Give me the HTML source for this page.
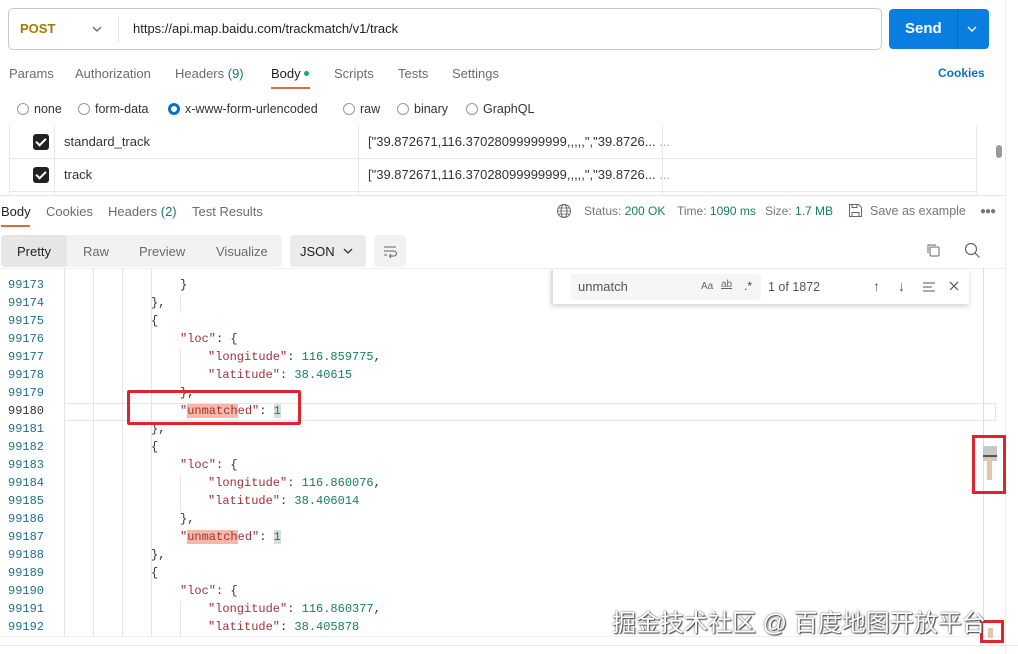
<!DOCTYPE html>
<html><head><meta charset="utf-8"><style>
*{margin:0;padding:0;box-sizing:border-box}
body{width:1018px;height:654px;overflow:hidden;background:#fff;font-family:"Liberation Sans",sans-serif;position:relative;color:#212121}
.a{position:absolute;white-space:nowrap}
.t{font-size:13px;color:#6b6b6b}
.ln{position:absolute;left:8px;width:50px;font-family:"Liberation Mono",monospace;font-size:12px;color:#1f6f8b}
.cl{position:absolute;font-family:"Liberation Mono",monospace;font-size:12px;color:#333;white-space:pre}
.k{color:#a3303a}.n{color:#15805b}
.g{position:absolute;top:268px;height:368px;width:1px;background:#e4e4e4}
.rad{display:inline-block;width:12px;height:12px;border:1px solid #999;border-radius:50%;vertical-align:-2px;margin-right:5px}
.cb{position:absolute;left:33px;width:16px;height:16px;background:#222;border-radius:3px}
.cb:after{content:"";position:absolute;left:5px;top:2px;width:4px;height:8px;border:solid #fff;border-width:0 2px 2px 0;transform:rotate(45deg)}
</style></head><body>
<div class="a" style="left:8px;top:8px;width:874px;height:42px;border:1px solid #c9c9c9;border-radius:5px"></div>
<div class="a" style="left:20px;top:21px;font-size:13px;color:#a37a00;font-weight:bold">POST</div>
<svg class="a" style="left:91px;top:24px" width="12" height="10"><path d="M2 3l4 4 4-4" fill="none" stroke="#666" stroke-width="1.3"/></svg>
<div class="a" style="left:118px;top:16px;width:1px;height:26px;background:#e2e2e2"></div>
<div class="a" style="left:133px;top:21px;font-size:13px;color:#222">https://api.map.baidu.com/trackmatch/v1/track</div>
<div class="a" style="left:889px;top:9px;width:100px;height:40px;background:#0a7ee0;border-radius:4px"></div>
<div class="a" style="left:957px;top:9px;width:1px;height:40px;background:#0868bb"></div>
<div class="a" style="left:905px;top:20px;font-size:15px;color:#fff;font-weight:bold">Send</div>
<svg class="a" style="left:966px;top:24px" width="12" height="10"><path d="M2 3l4 4 4-4" fill="none" stroke="#fff" stroke-width="1.4"/></svg>
<div class="a" style="left:1005px;top:0;width:1px;height:654px;background:#ececec"></div>
<div class="a t" style="left:9px;top:66px">Params</div>
<div class="a t" style="left:75px;top:66px">Authorization</div>
<div class="a t" style="left:175px;top:66px">Headers <span style="color:#15805b">(9)</span></div>
<div class="a" style="left:271px;top:66px;font-size:13px;color:#222">Body <span style="display:inline-block;width:5px;height:5px;border-radius:50%;background:#1aa86c;vertical-align:2px"></span></div>
<div class="a" style="left:271px;top:87px;width:39px;height:2px;background:#e06a3a"></div>
<div class="a t" style="left:334px;top:66px">Scripts</div>
<div class="a t" style="left:398px;top:66px">Tests</div>
<div class="a t" style="left:452px;top:66px">Settings</div>
<div class="a" style="left:938px;top:66px;font-size:12px;color:#0b6fc4;font-weight:bold">Cookies</div>
<div class="a" style="left:17px;top:102px;font-size:12.5px;color:#333"><span class="rad"></span>none</div>
<div class="a" style="left:78px;top:102px;font-size:12.5px;color:#333"><span class="rad"></span>form-data</div>
<div class="a" style="left:168px;top:102px;font-size:12.5px;color:#333"><span class="rad" style="border:3px solid #0b6fc4"></span>x-www-form-urlencoded</div>
<div class="a" style="left:343px;top:102px;font-size:12.5px;color:#333"><span class="rad"></span>raw</div>
<div class="a" style="left:397px;top:102px;font-size:12.5px;color:#333"><span class="rad"></span>binary</div>
<div class="a" style="left:466px;top:102px;font-size:12.5px;color:#333"><span class="rad"></span>GraphQL</div>
<div class="a" style="left:9px;top:126px;width:968px;height:68px;border-left:1px solid #e8e8e8;border-right:1px solid #e8e8e8"></div>
<div class="a" style="left:54px;top:126px;width:1px;height:68px;background:#e8e8e8"></div>
<div class="a" style="left:358px;top:126px;width:1px;height:68px;background:#e8e8e8"></div>
<div class="a" style="left:662px;top:126px;width:1px;height:68px;background:#e8e8e8"></div>
<div class="a" style="left:9px;top:158px;width:968px;height:1px;background:#e8e8e8"></div>
<div class="a" style="left:9px;top:191px;width:968px;height:1px;background:#e8e8e8"></div>
<div class="cb" style="top:134px"></div><div class="cb" style="top:167px"></div>
<div class="a" style="left:64px;top:134px;font-size:13px;color:#333">standard_track</div>
<div class="a" style="left:64px;top:167px;font-size:13px;color:#333">track</div>
<div class="a" style="left:368px;top:134px;font-size:13px;color:#333">["39.872671,116.37028099999999,,,,,","39.8726... <span style="color:#aaa">...</span></div>
<div class="a" style="left:368px;top:167px;font-size:13px;color:#333">["39.872671,116.37028099999999,,,,,","39.8726... <span style="color:#aaa">...</span></div>
<div class="a" style="left:996px;top:145px;width:6px;height:13px;background:#999;border-radius:3px"></div>
<div class="a" style="left:0;top:195px;width:1005px;height:1px;background:#e6e6e6"></div>
<div class="a" style="left:1px;top:204px;font-size:13px;color:#222">Body</div>
<div class="a" style="left:1px;top:225px;width:29px;height:2px;background:#e06a3a"></div>
<div class="a t" style="left:46px;top:204px">Cookies</div>
<div class="a t" style="left:108px;top:204px">Headers <span style="color:#15805b">(2)</span></div>
<div class="a t" style="left:192px;top:204px">Test Results</div>
<svg class="a" style="left:556px;top:203px" width="16" height="16"><circle cx="8" cy="8" r="6.5" fill="none" stroke="#666"/><ellipse cx="8" cy="8" rx="3" ry="6.5" fill="none" stroke="#666"/><path d="M1.5 8h13M2.5 5h11M2.5 11h11" stroke="#666" stroke-width=".8"/></svg>
<div class="a" style="left:584px;top:204px;font-size:12px;color:#777">Status: <span style="color:#15805b">200 OK</span></div>
<div class="a" style="left:677px;top:204px;font-size:12px;color:#777">Time: <span style="color:#15805b">1090 ms</span></div>
<div class="a" style="left:765px;top:204px;font-size:12px;color:#777">Size: <span style="color:#15805b">1.7 MB</span></div>
<svg class="a" style="left:848px;top:203px" width="15" height="15"><path d="M1.5 1.5h9l3 3v9h-12z M4 13.5v-4h7v4 M4 1.5v3h5v-3" fill="none" stroke="#666"/></svg>
<div class="a" style="left:870px;top:204px;font-size:12.5px;color:#777">Save as example</div>
<div class="a" style="left:980px;top:206px;font-size:10px;color:#777;letter-spacing:-1px">●●●</div>
<div class="a" style="left:1px;top:235px;width:281px;height:32px;background:#f2f2f2;border-radius:4px"></div>
<div class="a" style="left:1px;top:235px;width:66px;height:32px;background:#e6e6e6;border-radius:4px"></div>
<div class="a" style="left:17px;top:244px;font-size:13px;color:#222">Pretty</div>
<div class="a t" style="left:83px;top:244px">Raw</div>
<div class="a t" style="left:139px;top:244px">Preview</div>
<div class="a t" style="left:216px;top:244px">Visualize</div>
<div class="a" style="left:290px;top:235px;width:76px;height:32px;background:#ebebeb;border-radius:4px"></div>
<div class="a" style="left:300px;top:244px;font-size:13px;color:#222">JSON</div>
<svg class="a" style="left:342px;top:246px" width="12" height="10"><path d="M2 3l4 4 4-4" fill="none" stroke="#333" stroke-width="1.3"/></svg>
<div class="a" style="left:374px;top:235px;width:32px;height:32px;background:#f2f2f2;border-radius:4px"></div>
<svg class="a" style="left:382px;top:243px" width="16" height="16"><path d="M2 4h12M2 8h10a2.5 2.5 0 0 1 0 5H8M2 12h3M9 11l-1.5 2 1.5 2" fill="none" stroke="#666"/></svg>
<svg class="a" style="left:925px;top:242px" width="16" height="16"><rect x="5" y="5" width="9" height="9" rx="1" fill="none" stroke="#666"/><path d="M3 11V3h8" fill="none" stroke="#666"/></svg>
<svg class="a" style="left:964px;top:242px" width="17" height="17"><circle cx="7" cy="7" r="5.5" fill="none" stroke="#666" stroke-width="1.2"/><path d="M11 11l4.5 4.5" stroke="#666" stroke-width="1.2"/></svg>
<div class="a" style="left:0;top:268px;width:1005px;height:1px;background:#eee"></div>
<div class="g" style="left:64px"></div><div class="g" style="left:93px"></div><div class="g" style="left:122px"></div><div class="g" style="left:151px"></div>
<div class="a" style="left:180px;top:295px;width:1px;height:16px;background:#e4e4e4"></div>
<div class="a" style="left:180px;top:349px;width:1px;height:36px;background:#e4e4e4"></div>
<div class="a" style="left:180px;top:475px;width:1px;height:36px;background:#e4e4e4"></div>
<div class="a" style="left:180px;top:601px;width:1px;height:36px;background:#e4e4e4"></div>
<div class="a" style="left:64px;top:403px;width:932px;height:18px;border:1px solid #e6e6e6"></div>
<div class="a" style="left:983px;top:268px;width:1px;height:368px;background:#ddd"></div>
<div class="a" style="left:0;top:636px;width:1005px;height:1px;background:#eee"></div>
<div class="a" style="left:0;top:645px;width:1018px;height:1px;background:#e8e8e8"></div>

<div class="ln" style="top:278px">99173</div><div class="cl" style="left:180px;top:278px">}</div>
<div class="ln" style="top:296px">99174</div><div class="cl" style="left:151px;top:296px">},</div>
<div class="ln" style="top:314px">99175</div><div class="cl" style="left:151px;top:314px">{</div>
<div class="ln" style="top:332px">99176</div><div class="cl" style="left:180px;top:332px"><span class="k">"loc"</span>: {</div>
<div class="ln" style="top:350px">99177</div><div class="cl" style="left:208px;top:350px"><span class="k">"longitude"</span>: <span class="n">116.859775</span>,</div>
<div class="ln" style="top:368px">99178</div><div class="cl" style="left:208px;top:368px"><span class="k">"latitude"</span>: <span class="n">38.40615</span></div>
<div class="ln" style="top:386px">99179</div><div class="cl" style="left:180px;top:386px">},</div>
<div class="ln" style="top:404px;color:#333">99180</div><div class="cl" style="left:180px;top:404px"><span class="k">"<span style="background:#f6b9a6">unmatch</span>ed"</span>: <span class="n" style="background:#d8dedb">1</span></div>
<div class="ln" style="top:422px">99181</div><div class="cl" style="left:151px;top:422px">},</div>
<div class="ln" style="top:440px">99182</div><div class="cl" style="left:151px;top:440px">{</div>
<div class="ln" style="top:458px">99183</div><div class="cl" style="left:180px;top:458px"><span class="k">"loc"</span>: {</div>
<div class="ln" style="top:476px">99184</div><div class="cl" style="left:208px;top:476px"><span class="k">"longitude"</span>: <span class="n">116.860076</span>,</div>
<div class="ln" style="top:494px">99185</div><div class="cl" style="left:208px;top:494px"><span class="k">"latitude"</span>: <span class="n">38.406014</span></div>
<div class="ln" style="top:512px">99186</div><div class="cl" style="left:180px;top:512px">},</div>
<div class="ln" style="top:530px">99187</div><div class="cl" style="left:180px;top:530px"><span class="k">"<span style="background:#f6b9a6">unmatch</span>ed"</span>: <span class="n" style="background:#d8dedb">1</span></div>
<div class="ln" style="top:548px">99188</div><div class="cl" style="left:151px;top:548px">},</div>
<div class="ln" style="top:566px">99189</div><div class="cl" style="left:151px;top:566px">{</div>
<div class="ln" style="top:584px">99190</div><div class="cl" style="left:180px;top:584px"><span class="k">"loc"</span>: {</div>
<div class="ln" style="top:602px">99191</div><div class="cl" style="left:208px;top:602px"><span class="k">"longitude"</span>: <span class="n">116.860377</span>,</div>
<div class="ln" style="top:620px">99192</div><div class="cl" style="left:208px;top:620px"><span class="k">"latitude"</span>: <span class="n">38.405878</span></div>
<div class="a" style="left:127px;top:390px;width:174px;height:35px;border:3px solid #e0242e;border-radius:2px"></div>
<div class="a" style="left:551px;top:270px;width:418px;height:34px;background:#fff;box-shadow:0 2px 5px rgba(0,0,0,.18);border-left:2px solid #ddd"></div>
<div class="a" style="left:571px;top:274px;width:190px;height:26px;background:#f6f6f6;border-radius:3px"></div>
<div class="a" style="left:578px;top:279px;font-size:13px;color:#555">unmatch</div>
<div class="a" style="left:701px;top:281px;font-size:10px;color:#666">Aa</div>
<div class="a" style="left:721px;top:279px;font-size:10px;color:#666;text-decoration:underline">ab</div>
<div class="a" style="left:744px;top:279px;font-size:12px;color:#444">.*</div>
<div class="a" style="left:768px;top:280px;font-size:12.5px;color:#555">1 of 1872</div>
<div class="a" style="left:873px;top:278px;font-size:14px;color:#555">↑</div>
<div class="a" style="left:898px;top:278px;font-size:14px;color:#555">↓</div>
<svg class="a" style="left:922px;top:281px" width="14" height="12"><path d="M1 2h12M1 6h9M1 10h12" stroke="#555"/></svg>
<svg class="a" style="left:948px;top:280px" width="12" height="12"><path d="M2 2l8 8M10 2l-8 8" stroke="#555" stroke-width="1.2"/></svg>
<div class="a" style="left:972px;top:435px;width:34px;height:59px;border:3px solid #e0242e"></div>
<div class="a" style="left:983px;top:446px;width:14px;height:15px;background:#c8c8c8"></div>
<div class="a" style="left:983px;top:455px;width:14px;height:2px;background:#555"></div>
<div class="a" style="left:987px;top:458px;width:5px;height:22px;background:#e8c4a8"></div>
<div class="a" style="left:980px;top:620px;width:24px;height:23px;border:3px solid #e0242e"></div>
<div class="a" style="left:988px;top:628px;width:5px;height:10px;background:#e8c4a8"></div>
<div class="a" style="left:612px;top:603px;font-size:24px;color:#fff;font-family:'Liberation Sans','Noto Sans CJK SC',sans-serif;text-shadow:0 0 2px #555,1px 1px 1px #444">掘金技术社区 @ 百度地图开放平台</div>
</body></html>
